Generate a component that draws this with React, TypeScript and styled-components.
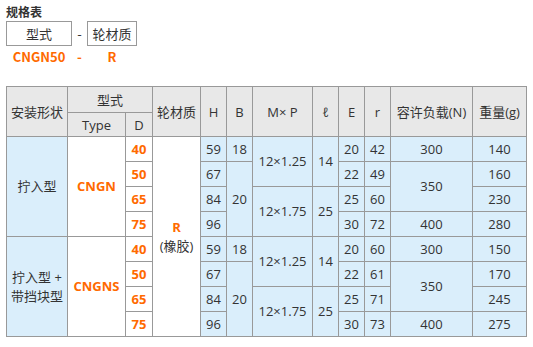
import styled, { createGlobalStyle } from "styled-components";

const GlobalStyle = createGlobalStyle`
  body {
    margin: 0;
    background: #fff;
    font-family: "Open Sans", "Noto Sans CJK SC", sans-serif;
    color: #333;
  }
`;

const Page = styled.div`
  padding: 4px 0 0 6px;
`;

const Title = styled.div`
  font-size: 12px;
  font-weight: bold;
  line-height: 16px;
  font-family: "Noto Sans CJK SC", sans-serif;
`;

const CodeRow = styled.div<{ $h: number; $gap: number }>`
  display: flex;
  align-items: center;
  height: ${(p) => p.$h}px;
  margin-top: ${(p) => p.$gap}px;
`;

const CodeCell = styled.div<{ $w: number; $boxed?: boolean; $accent?: boolean }>`
  width: ${(p) => p.$w}px;
  height: 25px;
  box-sizing: border-box;
  display: flex;
  align-items: center;
  justify-content: center;
  border: ${(p) => (p.$boxed ? "1px solid #999" : "none")};
  font-size: 13px;
  font-weight: ${(p) => (p.$accent ? "bold" : "normal")};
  color: ${(p) => (p.$accent ? "#ff6a00" : "#333")};
  font-family: "Noto Sans CJK SC", sans-serif;
`;

const Table = styled.table`
  margin-top: 20px;
  border-collapse: collapse;
  table-layout: fixed;
  width: 520px;
  font-size: 13px;
  font-family: "Open Sans", "Noto Sans CJK SC", sans-serif;
`;

const Th = styled.th`
  background: #e8e8e8;
  border: 1px solid #999;
  font-weight: normal;
  padding: 0;
  text-align: center;
  color: #333;
`;

const Td = styled.td<{ $white?: boolean; $accent?: boolean }>`
  background: ${(p) => (p.$white ? "#fff" : "#daeefb")};
  border: 1px solid #999;
  padding: 0;
  height: 24px;
  text-align: center;
  line-height: 19px;
  color: ${(p) => (p.$accent ? "#ff6a00" : "#333")};
  font-weight: ${(p) => (p.$accent ? "bold" : "normal")};
`;

const Accent = styled.div`
  color: #ff6a00;
  font-weight: bold;
`;

const HeadRow = styled.tr<{ $h: number }>`
  height: ${(p) => p.$h}px;
`;

const widths = [61, 58, 27, 48, 26, 26, 60, 26, 26, 26, 82, 54];

type Group = {
  shape: string[];
  type: string;
  rows: { d: string; h: string; e: string; r: string; w: string }[];
  load: [string, string, string];
};

const groups: Group[] = [
  {
    shape: ["拧入型"],
    type: "CNGN",
    rows: [
      { d: "40", h: "59", e: "20", r: "42", w: "140" },
      { d: "50", h: "67", e: "22", r: "49", w: "160" },
      { d: "65", h: "84", e: "25", r: "60", w: "230" },
      { d: "75", h: "96", e: "30", r: "72", w: "280" },
    ],
    load: ["300", "350", "400"],
  },
  {
    shape: ["拧入型 +", "带挡块型"],
    type: "CNGNS",
    rows: [
      { d: "40", h: "59", e: "20", r: "60", w: "150" },
      { d: "50", h: "67", e: "22", r: "61", w: "170" },
      { d: "65", h: "84", e: "25", r: "71", w: "245" },
      { d: "75", h: "96", e: "30", r: "73", w: "275" },
    ],
    load: ["300", "350", "400"],
  },
];

export default function App() {
  return (
    <>
      <GlobalStyle />
      <Page>
        <Title>规格表</Title>
        <CodeRow $h={25} $gap={1}>
          <CodeCell $w={66} $boxed>型式</CodeCell>
          <CodeCell $w={15}>-</CodeCell>
          <CodeCell $w={50} $boxed>轮材质</CodeCell>
        </CodeRow>
        <CodeRow $h={19} $gap={1}>
          <CodeCell $w={66} $accent>CNGN50</CodeCell>
          <CodeCell $w={15} $accent>-</CodeCell>
          <CodeCell $w={50} $accent>R</CodeCell>
        </CodeRow>
        <Table>
          <colgroup>
            {widths.map((w, i) => (
              <col key={i} style={{ width: w }} />
            ))}
          </colgroup>
          <thead>
            <HeadRow $h={26}>
              <Th rowSpan={2}>安装形状</Th>
              <Th colSpan={2}>型式</Th>
              <Th rowSpan={2}>轮材质</Th>
              <Th rowSpan={2}>H</Th>
              <Th rowSpan={2}>B</Th>
              <Th rowSpan={2}>M× P</Th>
              <Th rowSpan={2}>ℓ</Th>
              <Th rowSpan={2}>E</Th>
              <Th rowSpan={2}>r</Th>
              <Th rowSpan={2}>容许负载(N)</Th>
              <Th rowSpan={2}>重量(g)</Th>
            </HeadRow>
            <HeadRow $h={24}>
              <Th>Type</Th>
              <Th>D</Th>
            </HeadRow>
          </thead>
          <tbody>
            {groups.map((g, gi) =>
              g.rows.map((r, i) => (
                <tr key={`${gi}-${i}`}>
                  {i === 0 && (
                    <Td rowSpan={4}>
                      {g.shape.map((s) => (
                        <div key={s}>{s}</div>
                      ))}
                    </Td>
                  )}
                  {i === 0 && (
                    <Td rowSpan={4} $white $accent>
                      {g.type}
                    </Td>
                  )}
                  <Td $white $accent>
                    {r.d}
                  </Td>
                  {gi === 0 && i === 0 && (
                    <Td rowSpan={8} $white>
                      <Accent>R</Accent>
                      <div>(橡胶)</div>
                    </Td>
                  )}
                  <Td>{r.h}</Td>
                  {i === 0 && <Td>18</Td>}
                  {i === 1 && <Td rowSpan={3}>20</Td>}
                  {i === 0 && <Td rowSpan={2}>12×1.25</Td>}
                  {i === 2 && <Td rowSpan={2}>12×1.75</Td>}
                  {i === 0 && <Td rowSpan={2}>14</Td>}
                  {i === 2 && <Td rowSpan={2}>25</Td>}
                  <Td>{r.e}</Td>
                  <Td>{r.r}</Td>
                  {i === 0 && <Td>{g.load[0]}</Td>}
                  {i === 1 && <Td rowSpan={2}>{g.load[1]}</Td>}
                  {i === 3 && <Td>{g.load[2]}</Td>}
                  <Td>{r.w}</Td>
                </tr>
              ))
            )}
          </tbody>
        </Table>
      </Page>
    </>
  );
}
